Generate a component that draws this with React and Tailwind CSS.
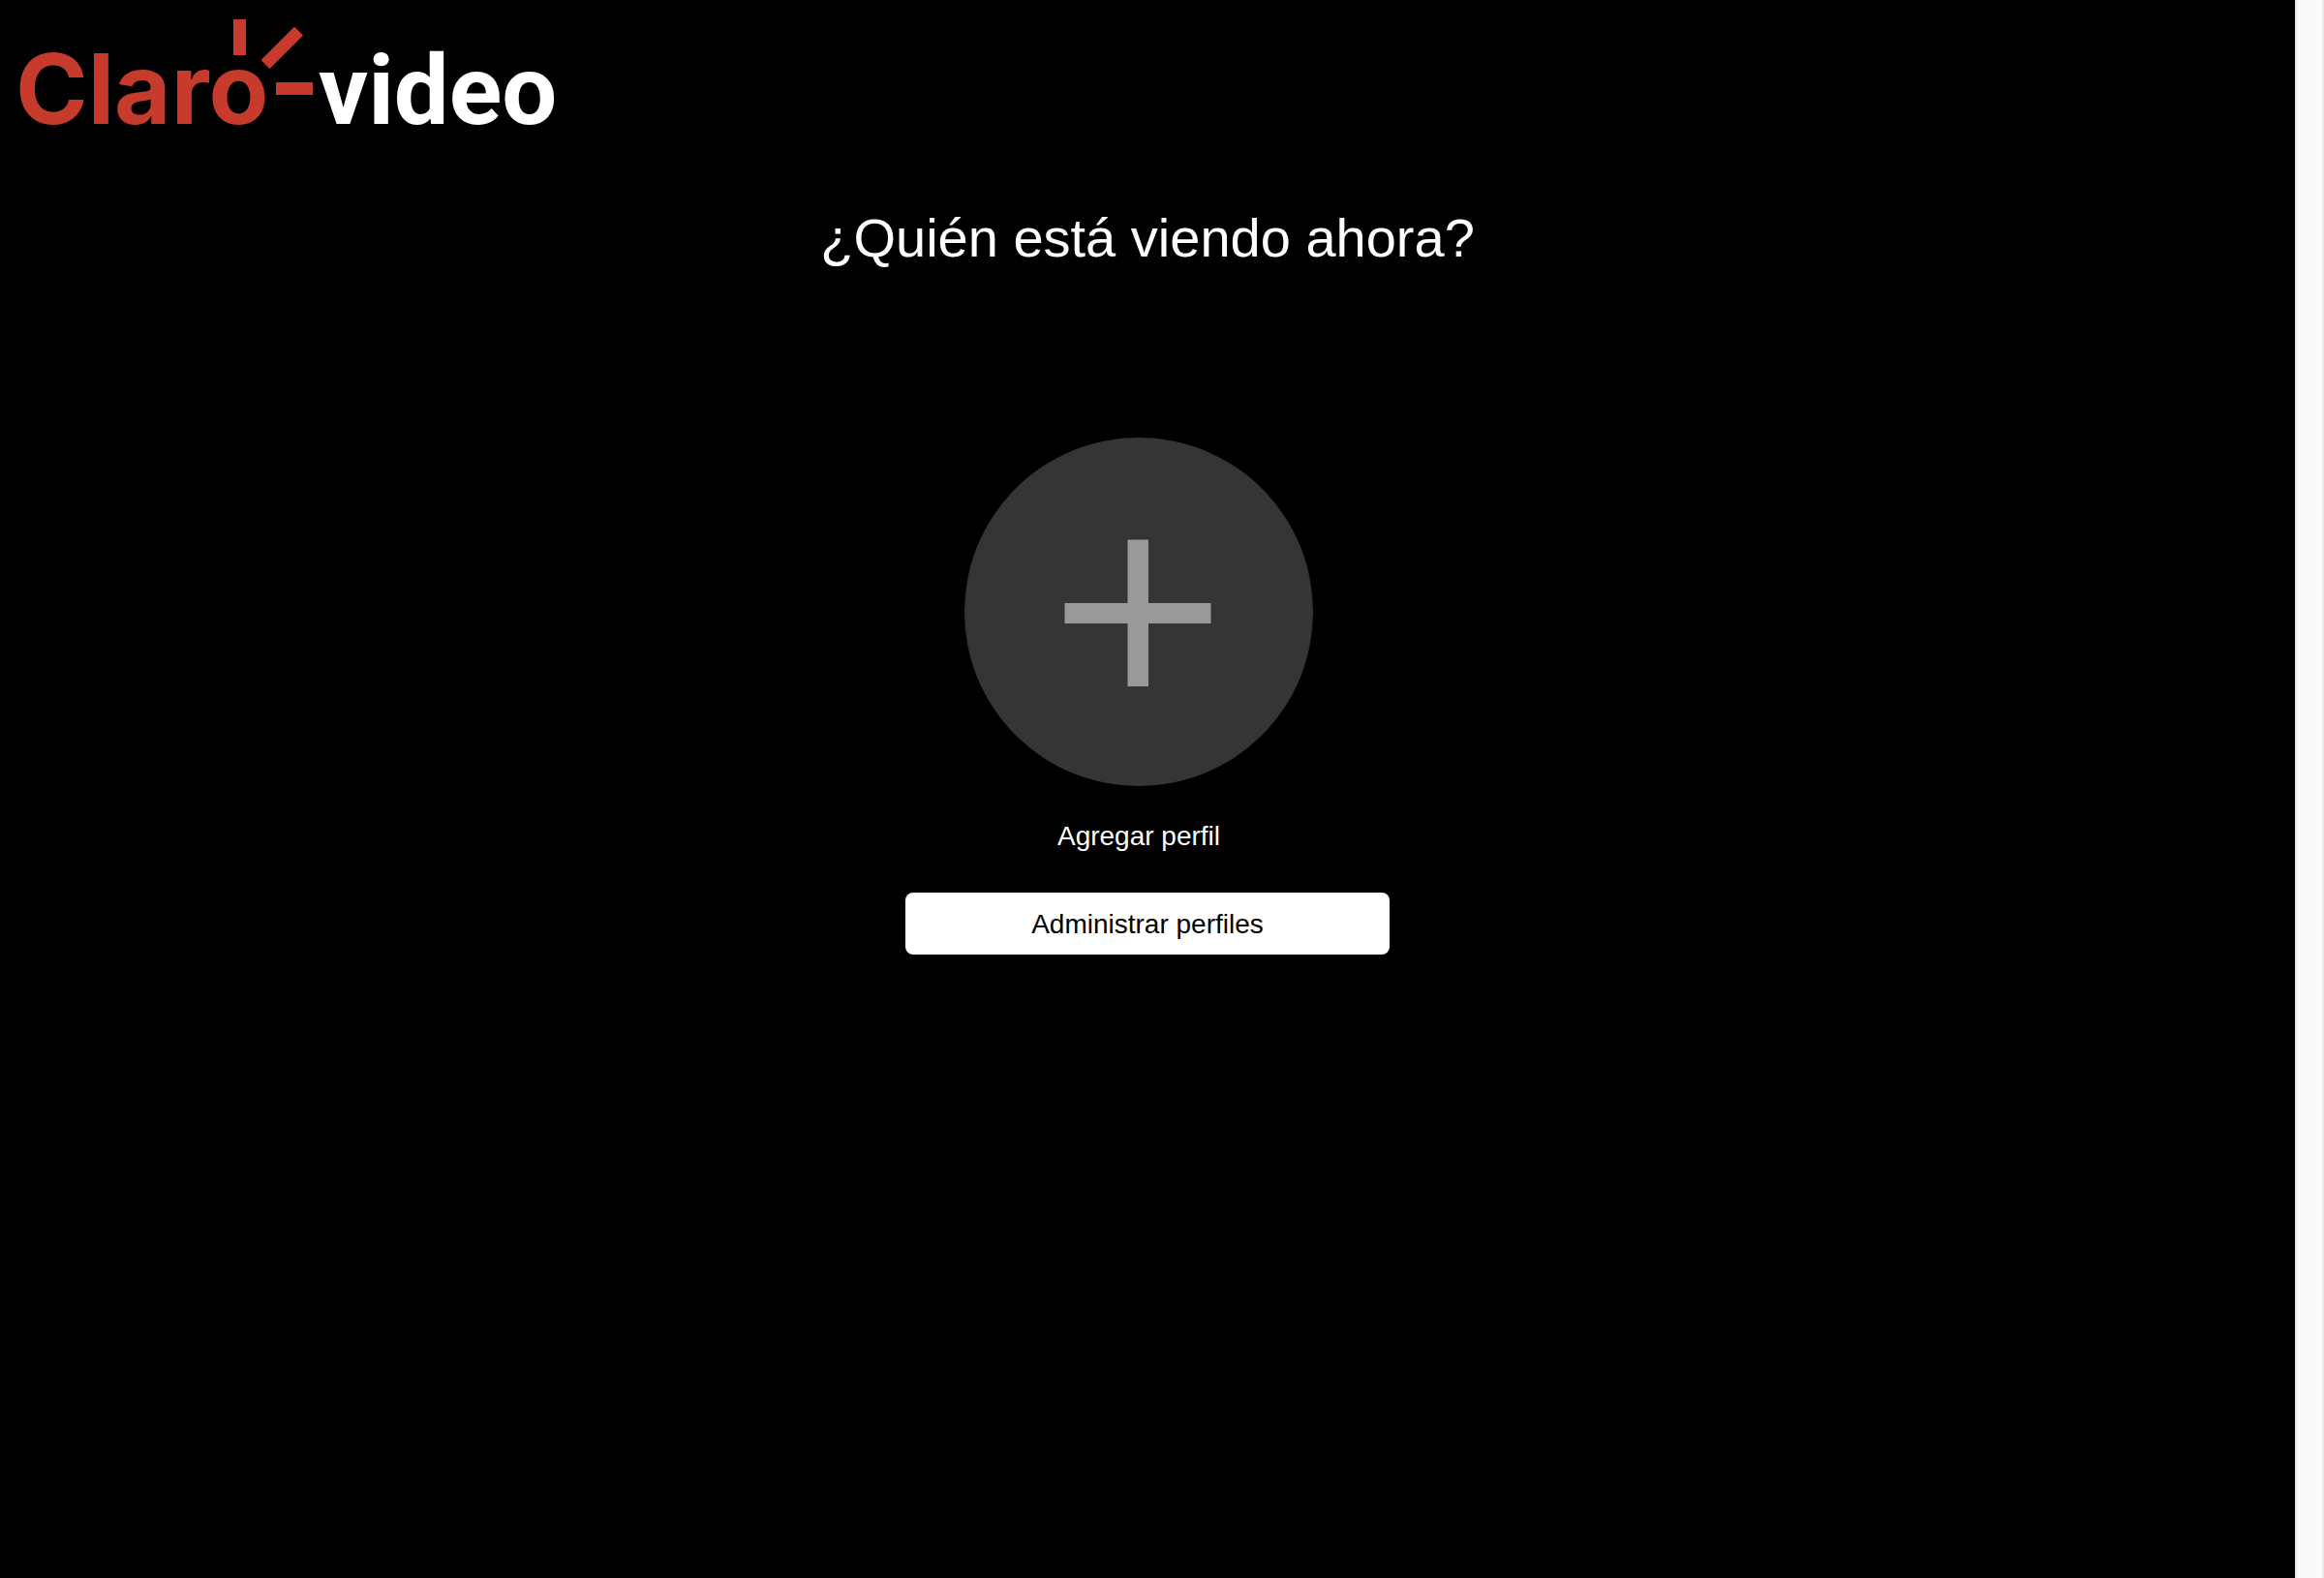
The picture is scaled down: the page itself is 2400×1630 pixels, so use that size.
function Logo() {
  return (
    <svg
      viewBox="0 0 600 160"
      className="block h-[160px] w-[600px]"
      role="img"
      aria-label="Claro video"
    >
      <text x="16" y="128" fill="#c63b2c" fontFamily="Inter, sans-serif" fontWeight="700" fontSize="101">
        Claro
      </text>
      <g fill="#c63b2c">
        <rect x="241" y="20" width="13" height="37" />
        <path d="M304 27.500 L313 36.500 L278.500 71 L269.500 62 Z" />
        <rect x="285" y="85" width="38" height="13" />
      </g>
      <text x="329" y="128" fill="#ffffff" fontFamily="Roboto, sans-serif" fontWeight="700" fontSize="101">
        video
      </text>
    </svg>
  );
}

function PlusIcon() {
  return (
    <svg viewBox="0 0 360 360" className="block size-full" aria-hidden="true">
      <circle cx="180" cy="180" r="180" fill="#353535" />
      <path
        d="M168.500 105.500H190V171H254.500V192H190V257H168.500V192H103.500V171H168.500Z"
        fill="#999999"
      />
    </svg>
  );
}

export default function App() {
  return (
    <div className="flex min-h-screen bg-black font-['Liberation_Sans',Arial,sans-serif] text-white">
      <div className="flex flex-1 flex-col">
        <header>
          <a href="#inicio" className="inline-block align-top">
            <Logo />
          </a>
        </header>
        <main className="flex flex-col items-center pt-[54px]">
          <h1 className="text-[56px] leading-16">¿Quién está viendo ahora?</h1>
          <ul className="mt-[174px] flex justify-center">
            <li className="mr-[18px]">
              <button type="button" className="flex cursor-pointer flex-col items-center gap-9">
                <span className="block size-[360px]">
                  <PlusIcon />
                </span>
                <span className="text-[28px] leading-8">Agregar perfil</span>
              </button>
            </li>
          </ul>
          <button
            type="button"
            className="mt-[42px] h-16 w-[500px] cursor-pointer rounded-lg bg-white pt-0.5 text-[28px] leading-8 text-black"
          >
            Administrar perfiles
          </button>
        </main>
      </div>
      <div className="w-[30px] border-x-2 border-[#ebebeb] bg-[#fafafa]" aria-hidden="true" />
    </div>
  );
}
